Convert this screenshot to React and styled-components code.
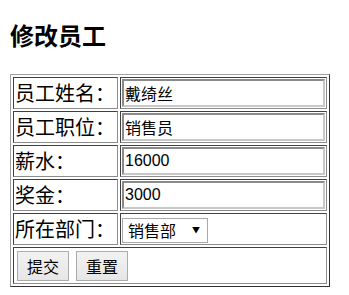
import React from "react";
import styled, { createGlobalStyle } from "styled-components";

const Global = createGlobalStyle`
  html, body { margin: 0; padding: 0; background: #fff; }
  body { font-family: "Noto Sans CJK SC", "Liberation Sans", sans-serif; color: #000; }
`;

const Page = styled.div`
  padding: 0 10px;
`;

const Title = styled.h2`
  margin: 18px 0 23px;
  font-size: 24px;
  line-height: 33px;
  font-weight: bold;
  font-family: "Noto Sans CJK SC", sans-serif;
`;

const Table = styled.table`
  width: 320px;
  border: 1px solid;
  border-color: #a0a0a0 #303030 #303030 #a0a0a0;
  border-spacing: 2px;
`;

const Cell = styled.td`
  border: 1px solid;
  border-color: #404040 #8c8c8c #8c8c8c #404040;
  padding: 1px;
  font-size: 20px;
  line-height: 26px;
  height: ${(p) => p.$h || 28}px;
  width: ${(p) => (p.$w ? p.$w + "px" : "auto")};
  white-space: nowrap;
  vertical-align: middle;
  box-sizing: content-box;
`;

const TextInput = styled.input`
  display: block;
  box-sizing: border-box;
  width: 203px;
  height: 28px;
  margin: 0;
  padding: 1px;
  border: 2px solid;
  border-color: #8a8a8a #c8c8c8 #c8c8c8 #8a8a8a;
  font-family: "Liberation Sans", "Noto Sans CJK SC", sans-serif;
  font-size: 16px;
  color: #000;
  background: #fff;
  outline: none;
`;

const SelectWrap = styled.span`
  position: relative;
  display: inline-block;
  vertical-align: middle;
`;

const Select = styled.select`
  appearance: none;
  -webkit-appearance: none;
  box-sizing: border-box;
  width: 86px;
  height: 25px;
  margin: 0;
  padding: 0 20px 0 5px;
  border: 1px solid #a9a9a9;
  border-radius: 0;
  background: #fff;
  font-family: "Noto Sans CJK SC", sans-serif;
  font-size: 16px;
  line-height: 23px;
  color: #000;
  display: block;
`;

const Arrow = styled.span`
  position: absolute;
  right: 8px;
  top: 7px;
  font-size: 8px;
  line-height: 10px;
  pointer-events: none;
  color: #000;
`;

const Buttons = styled.div`
  display: flex;
  gap: 7px;
  padding: 2px 1px 1px 2px;
`;

const Button = styled.button`
  box-sizing: border-box;
  width: 52px;
  height: 30px;
  margin: 0;
  padding: 0;
  border: 1px solid #acacac;
  background: linear-gradient(#f2f2f2, #e6e6e6);
  font-family: "Noto Sans CJK SC", sans-serif;
  font-size: 16px;
  color: #000;
`;

const rows = [
  { label: "员工姓名：", value: "戴绮丝" },
  { label: "员工职位：", value: "销售员" },
  { label: "薪水：", value: "16000" },
  { label: "奖金：", value: "3000" },
];

export default function App() {
  return (
    <Page>
      <Global />
      <Title>修改员工</Title>
      <Table>
        <tbody>
          {rows.map((r) => (
            <tr key={r.label}>
              <Cell $w={101}>{r.label}</Cell>
              <Cell>
                <TextInput defaultValue={r.value} />
              </Cell>
            </tr>
          ))}
          <tr>
            <Cell $w={101} $h={26}>所在部门：</Cell>
            <Cell $h={26}>
              <SelectWrap>
                <Select defaultValue="销售部">
                  <option>销售部</option>
                  <option>市场部</option>
                  <option>技术部</option>
                </Select>
                <Arrow>▼</Arrow>
              </SelectWrap>
            </Cell>
          </tr>
          <tr>
            <Cell colSpan={2} $h={31}>
              <Buttons>
                <Button type="button">提交</Button>
                <Button type="button">重置</Button>
              </Buttons>
            </Cell>
          </tr>
        </tbody>
      </Table>
    </Page>
  );
}
